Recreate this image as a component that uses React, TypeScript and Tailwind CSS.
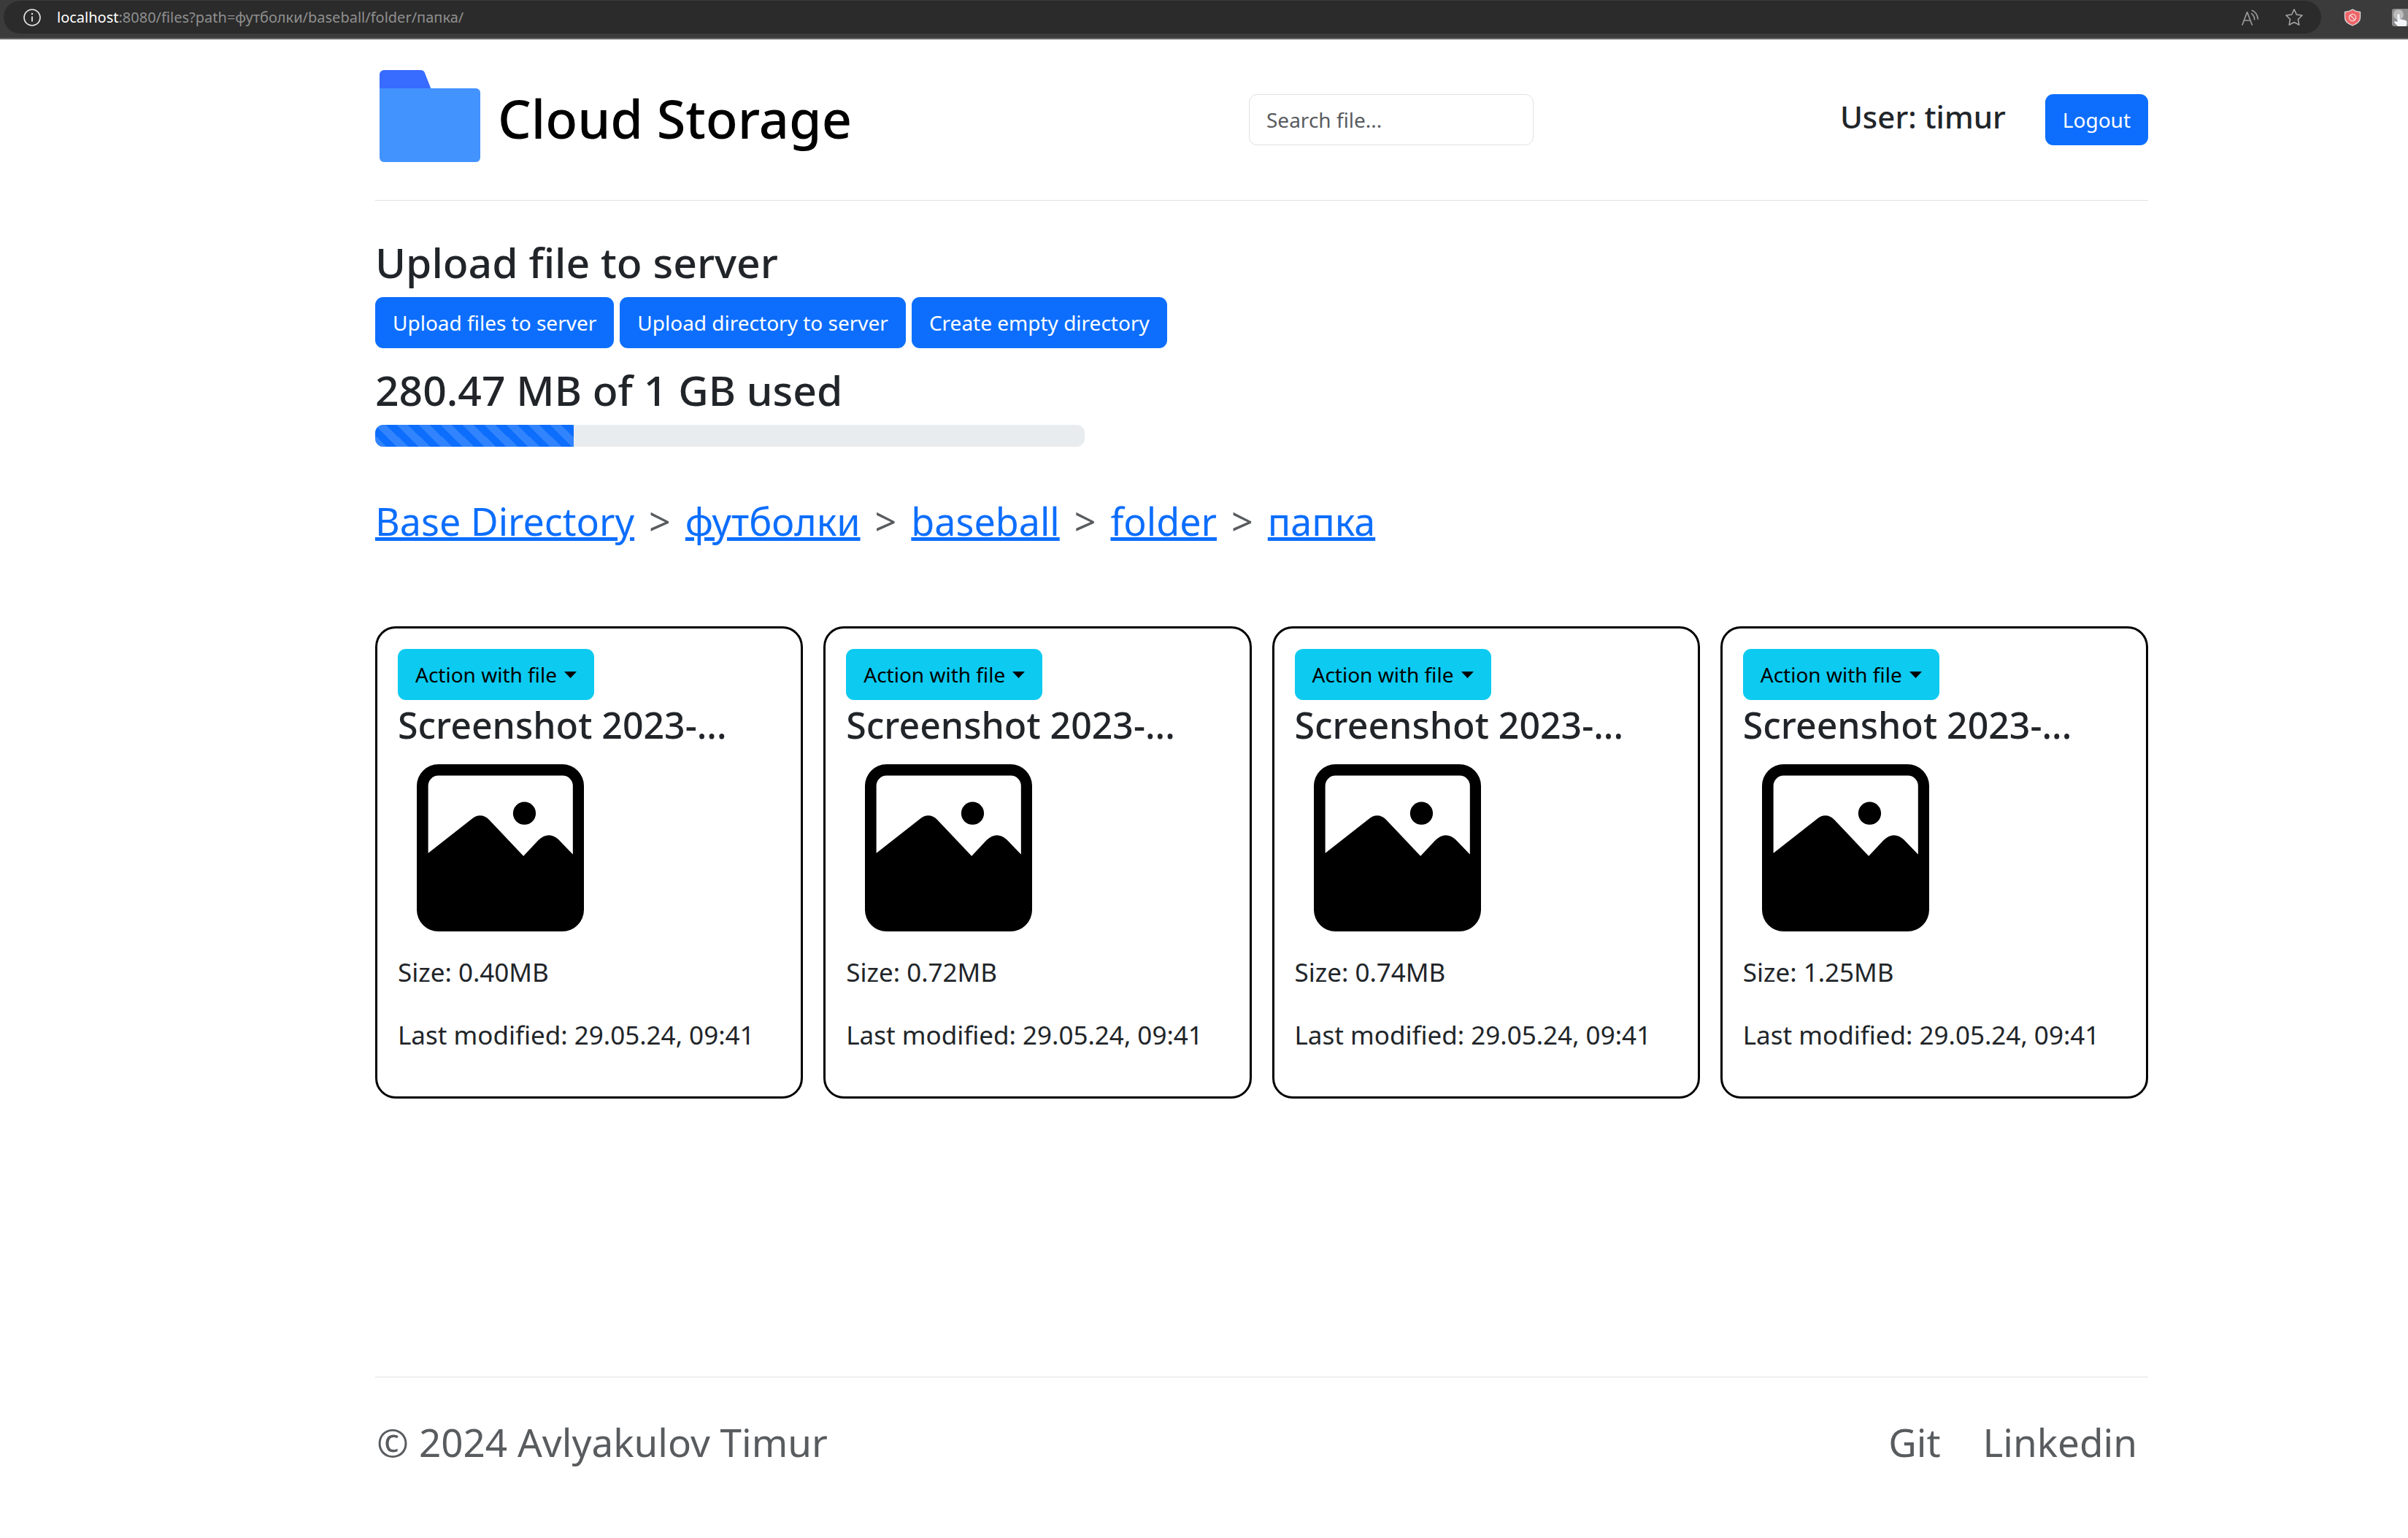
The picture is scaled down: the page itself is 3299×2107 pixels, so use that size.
const files = [
  { name: "Screenshot 2023-...", size: "0.40MB", modified: "29.05.24, 09:41" },
  { name: "Screenshot 2023-...", size: "0.72MB", modified: "29.05.24, 09:41" },
  { name: "Screenshot 2023-...", size: "0.74MB", modified: "29.05.24, 09:41" },
  { name: "Screenshot 2023-...", size: "1.25MB", modified: "29.05.24, 09:41" },
];

const crumbs = ["Base Directory", "футболки", "baseball", "folder", "папка"];

const uploadActions = [
  "Upload files to server",
  "Upload directory to server",
  "Create empty directory",
];

function BrowserBar() {
  return (
    <div className="flex h-[54px] items-start border-b-2 border-[#676565] bg-[#3b3b3b] pt-px pl-[5px]">
      <div className="flex h-[45px] flex-1 items-center rounded-full bg-[#2b2b2b] pr-[24px] pl-[27px]">
        <svg className="mr-[22px] size-6" viewBox="0 0 24 24" fill="none" stroke="#e6e6e6" aria-hidden="true">
          <circle cx="12" cy="12" r="11" strokeWidth="1.6" />
          <path d="M12 10.5v7" strokeWidth="1.8" />
          <circle cx="12" cy="7" r="1.2" fill="#e6e6e6" stroke="none" />
        </svg>
        <p className="flex-1 text-[20px] leading-[28px] text-[#8f8f8f]">
          <span className="text-white">localhost</span>
          :8080/files?path=футболки/baseball/folder/папка/
        </p>
        <button type="button" aria-label="Read aloud" className="mr-[34px]">
          <svg className="h-[24px] w-[26px]" viewBox="0 0 78 72" fill="none" stroke="#9a9a9a" strokeWidth="5" strokeLinecap="round" strokeLinejoin="round">
            <path d="M6 66 26 14 46 66M13 48h26" />
            <path d="M44 20c8 6 12 13 12 24M46 7c15 6 22 17 24 35" />
          </svg>
        </button>
        <button type="button" aria-label="Add to favorites">
          <svg className="size-[26px]" viewBox="0 0 24 24" fill="none" stroke="#a8a8a8" strokeWidth="1.4" strokeLinejoin="round">
            <path d="M12 1.8l3.1 6.5 7.1 1-5.2 5 1.3 7.1L12 18l-6.3 3.4L7 14.3l-5.2-5 7.1-1z" />
          </svg>
        </button>
      </div>
      <div className="flex h-[45px] items-center gap-[42px] pl-[31px]">
        <svg className="size-[24px]" viewBox="0 0 24 24" aria-hidden="true">
          <path d="M12 1c3 2 6.5 3.2 10.5 3.5v7.5c0 5-4 8.500-10.500 11C5.500 20.500 1.500 17 1.500 12V4.500C5.500 4.200 9 3 12 1z" fill="#ef6468" stroke="#dcdcdc" strokeWidth="1.3" />
          <circle cx="12" cy="12" r="4.6" fill="none" stroke="#f4dede" strokeWidth="1.3" />
          <path d="M9 9l6 6" stroke="#f4dede" strokeWidth="1.3" />
        </svg>
        <svg className="h-[24px] w-[22px]" viewBox="0 0 22 24" aria-hidden="true">
          <path d="M3 0h19v24H3a3 3 0 0 1-3-3V3a3 3 0 0 1 3-3z" fill="#8d8d8d" />
          <circle cx="9" cy="8" r="7" fill="#bcbcbc" />
          <path d="M7.500 8.500a1.500 1.500 0 0 1 3 0V14l7 1.500c2 .5 3 1.500 3 3.500l-1 5H8l-5-5.500 1-1.500 3.500 1z" fill="#f2f5fa" />
        </svg>
      </div>
    </div>
  );
}

function FolderLogo() {
  return (
    <svg className="size-[150px]" viewBox="0 0 150 150" aria-hidden="true">
      <path d="M6 44V18a6 6 0 0 1 6-6h50c3 0 5 1 6 4l11 28z" fill="#386bff" />
      <path d="M6 37h132a6 6 0 0 1 6 6v89a6 6 0 0 1-6 6H12a6 6 0 0 1-6-6z" fill="#4393ff" />
    </svg>
  );
}

function PictureIcon() {
  return (
    <svg className="mt-6 ml-[26px] size-[229px]" viewBox="0 0 528 528" role="img" aria-label="Image file">
      <path
        fillRule="evenodd"
        d="M68 0H460A68 68 0 0 1 528 68V460A68 68 0 0 1 460 528H68A68 68 0 0 1 0 460V68A68 68 0 0 1 68 0ZM68 36A32 32 0 0 0 36 68V281L172 174C190 158 212 158 229 176L337 290L384 240C404 219 428 219 448 238L493 285V68A32 32 0 0 0 461 36Z"
      />
      <circle cx="340" cy="155" r="36" />
    </svg>
  );
}

function FileCard({ file }: { file: (typeof files)[number] }) {
  return (
    <article className="rounded-[28px] border-[3px] border-black px-7 pt-7 pb-[58px]">
      <button
        type="button"
        className="flex h-[70px] items-center gap-[10px] rounded-[11px] bg-[#0dcaf0] px-6 text-[28px] leading-[42px] text-black"
      >
        Action with file
        <svg className="h-[9px] w-[17px]" viewBox="0 0 17 9" aria-hidden="true">
          <path d="M0 0h17L8.500 9z" />
        </svg>
      </button>
      <h3 className="mt-1 text-[50px] leading-[60px] font-medium whitespace-nowrap">{file.name}</h3>
      <PictureIcon />
      <p className="mt-[30px] text-[35px] leading-[52px]">Size: {file.size}</p>
      <p className="mt-[34px] text-[35px] leading-[52px]">Last modified: {file.modified}</p>
    </article>
  );
}

export default function App() {
  return (
    <div className="min-h-screen bg-white font-['Noto_Sans',sans-serif] text-[#212529]">
      <BrowserBar />
      <div className="pr-[356px] pl-[514px]">
        <header className="grid h-[221px] grid-cols-[1197fr_390px_842fr] items-center border-b border-[#dee2e6]">
          <a href="#home" className="flex items-center gap-[18px] pb-[11px] text-black">
            <FolderLogo />
            <h1 className="pt-[6px] text-[72px] leading-[84px] font-medium">Cloud Storage</h1>
          </a>
          <input
            type="search"
            aria-label="Search file"
            placeholder="Search file..."
            className="h-[70px] w-full rounded-[11px] border border-[#dee2e6] px-[23px] text-[28px] leading-[42px] placeholder:text-[#595c5f]"
          />
          <div className="flex items-center justify-end gap-[54px]">
            <p className="pb-2 text-[42px] leading-[50px] font-medium">User: timur</p>
            <button type="button" className="h-[70px] rounded-[11px] bg-[#0d6efd] px-6 text-[28px] leading-[42px] text-white">
              Logout
            </button>
          </div>
        </header>

        <main>
          <section className="pt-[50px]">
            <h2 className="text-[57px] leading-[68px] font-medium">Upload file to server</h2>
            <div className="mt-[14px] flex gap-2">
              {uploadActions.map((label) => (
                <button
                  key={label}
                  type="button"
                  className="h-[70px] rounded-[11px] bg-[#0d6efd] px-6 text-[28px] leading-[42px] text-white"
                >
                  {label}
                </button>
              ))}
            </div>
            <h2 className="mt-[23px] text-[57px] leading-[68px] font-medium">280.47 MB of 1 GB used</h2>
            <div
              role="progressbar"
              aria-label="Storage used"
              aria-valuenow={28}
              aria-valuemin={0}
              aria-valuemax={100}
              className="mt-[14px] h-[30px] w-2/5 overflow-hidden rounded-[11px] bg-[#e9ecef]"
            >
              <div className="h-full w-[28%] bg-[#0d6efd] bg-[linear-gradient(45deg,rgba(255,255,255,.15)_25%,transparent_25%,transparent_50%,rgba(255,255,255,.15)_50%,rgba(255,255,255,.15)_75%,transparent_75%,transparent)] bg-[length:30px_30px]" />
            </div>
          </section>

          <nav aria-label="Breadcrumb" className="mt-[62px]">
            <ol className="flex gap-5 text-[52px] leading-[80px] text-[#595c5f]">
              {crumbs.map((crumb, i) => (
                <li key={crumb} className="flex gap-5">
                  {i > 0 && <span>&gt;</span>}
                  <a href={"#" + crumb} className="text-[#0d6efd] underline decoration-[5px] underline-offset-[2px]">
                    {crumb}
                  </a>
                </li>
              ))}
            </ol>
          </nav>

          <section aria-label="Files" className="mt-[104px] grid grid-cols-4 gap-7">
            {files.map((file) => (
              <FileCard key={file.size} file={file} />
            ))}
          </section>
        </main>

        <footer className="mt-[381px] flex justify-between border-t border-[#dee2e6] pt-[49px] pr-[15px] pb-16 pl-[2px] text-[53px] leading-[80px] text-[#595c5f]">
          <p>© 2024 Avlyakulov Timur</p>
          <div className="flex gap-[58px]">
            <a href="#git">Git</a>
            <a href="#linkedin">Linkedin</a>
          </div>
        </footer>
      </div>
    </div>
  );
}
